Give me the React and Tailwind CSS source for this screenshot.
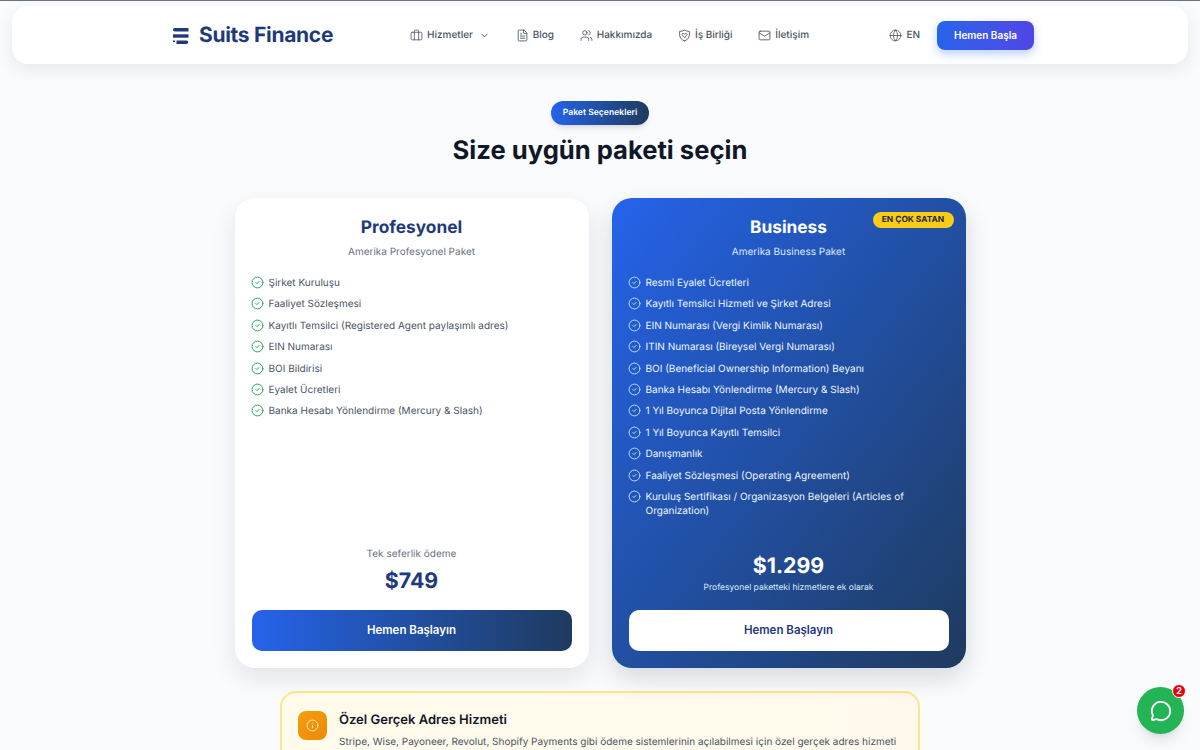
import { Briefcase, ChevronDown, CircleCheck, FileText, Globe, Info, Mail, MessageCircle, Users } from 'lucide-react';

const ShieldHeart = ({ size, strokeWidth }) => (
  <svg width={size} height={size} viewBox="0 0 24 24" fill="none" stroke="currentColor" strokeWidth={strokeWidth} strokeLinecap="round" strokeLinejoin="round">
    <path d="M12 22c-4.500-1.600-9-5.200-9-11V4.500C6 4.500 9 3.500 12 2c3 1.500 6 2.500 9 2.500V11c0 5.800-4.500 9.400-9 11z" />
    <path d="M12 15.500l-3.800-3.600c-1-1-1-2.500 0-3.300 1-.8 2.300-.6 3.100.2l.7.700.7-.7c.8-.8 2.100-1 3.100-.2 1 .8 1 2.300 0 3.300z" />
  </svg>
);

const navLinks = [
  { label: 'Blog', Icon: FileText },
  { label: 'Hakkımızda', Icon: Users },
  { label: 'İş Birliği', Icon: ShieldHeart },
  { label: 'İletişim', Icon: Mail },
];

const proFeatures = [
  'Şirket Kuruluşu',
  'Faaliyet Sözleşmesi',
  'Kayıtlı Temsilci (Registered Agent paylaşımlı adres)',
  'EIN Numarası',
  'BOI Bildirisi',
  'Eyalet Ücretleri',
  'Banka Hesabı Yönlendirme (Mercury & Slash)',
];

const businessFeatures = [
  'Resmi Eyalet Ücretleri',
  'Kayıtlı Temsilci Hizmeti ve Şirket Adresi',
  'EIN Numarası (Vergi Kimlik Numarası)',
  'ITIN Numarası (Bireysel Vergi Numarası)',
  'BOI (Beneficial Ownership Information) Beyanı',
  'Banka Hesabı Yönlendirme (Mercury & Slash)',
  '1 Yıl Boyunca Dijital Posta Yönlendirme',
  '1 Yıl Boyunca Kayıtlı Temsilci',
  'Danışmanlık',
  'Faaliyet Sözleşmesi (Operating Agreement)',
  'Kuruluş Sertifikası / Organizasyon Belgeleri (Articles of Organization)',
];

const Logo = () => (
  <svg width="17" height="18" viewBox="0 0 17 18" fill="#1e3a7b">
    <path d="M3 1h13.500v3.400H3C1.800 4.400 1 3.600 1 2.700S1.800 1 3 1z" />
    <path d="M1 7.300h15.500v3.400H1z" />
    <path d="M4.500 13.600h9.500c1.300 0 2.300.7 2.300 1.700s-1 1.700-2.300 1.700H4.500z" />
    <path d="M1 13.600h2v1.400H1z" />
  </svg>
);

const FeatureList = ({ items, light }) => (
  <ul className="flex flex-col gap-[7px]">
    {items.map((item) => (
      <li key={item} className={`flex items-start gap-[5px] text-[10px] leading-[14.4px] ${light ? 'text-blue-50' : 'text-gray-600'}`}>
        <CircleCheck size={13} strokeWidth={1.8} className={`-ml-[1px] shrink-0 ${light ? 'text-blue-200' : 'text-[#22a35a]'}`} />
        <span>{item}</span>
      </li>
    ))}
  </ul>
);

export default function App() {
  return (
    <div className="relative h-[750px] overflow-hidden border-t border-gray-500 bg-[#f9fbfd] font-['Inter',sans-serif] [text-rendering:geometricPrecision]">
      {/* Navbar */}
      <div className="px-3 pt-[5px]">
        <header className="flex h-[58px] items-center rounded-2xl bg-white pl-[160px] pr-[154px] shadow-[0_6px_18px_rgba(15,23,42,0.08)]">
          <div className="flex w-[238px] items-center gap-[10px] pt-[1px]">
            <Logo />
            <span className="text-[21px] font-bold tracking-[-0.3px] text-[#1e3a7b]">Suits Finance</span>
          </div>
          <nav className="flex items-center gap-[25.7px] text-[10px] font-medium text-gray-600">
            <span className="flex items-center gap-[4px]">
              <Briefcase size={13} strokeWidth={1.5} />
              Hizmetler
              <ChevronDown size={11} className="ml-[2px]" />
            </span>
            {navLinks.map(({ label, Icon }) => (
              <span key={label} className="flex items-center gap-[4px]">
                <Icon size={13} strokeWidth={1.6} />
                {label}
              </span>
            ))}
          </nav>
          <div className="ml-auto flex items-center gap-[4px] text-[10px] font-medium text-gray-600">
            <Globe size={13} strokeWidth={1.5} />
            EN
          </div>
          <button className="ml-[17px] h-[29px] w-[97px] rounded-lg bg-gradient-to-r from-[#2563eb] to-[#4f46e5] text-[10px] font-semibold text-white shadow-[0_4px_10px_rgba(37,99,235,0.3)]">
            Hemen Başla
          </button>
        </header>
      </div>

      {/* Pricing */}
      <main className="flex flex-col items-center pt-[37px]">
        <span className="flex h-[24px] w-[98px] items-center justify-center rounded-full bg-gradient-to-r from-[#2563eb] to-[#1e3a5f] text-[8.6px] font-semibold text-white shadow-md">
          Paket Seçenekleri
        </span>
        <h1 className="mt-[8px] text-[25.6px] font-bold leading-[36px] text-gray-900">Size uygün paketi seçin</h1>

        <div className="mt-[29px] flex gap-[23px]">
          {/* Profesyonel */}
          <section className="flex h-[470px] w-[354px] flex-col rounded-[20px] bg-white px-[17px] pb-[17px] pt-[19px] shadow-[0_10px_25px_rgba(15,23,42,0.1)]">
            <h2 className="text-center text-[17.3px] font-bold leading-[22px] text-[#1e3a7b]">Profesyonel</h2>
            <p className="mt-[6px] mb-[17px] text-center text-[10px] leading-[14px] text-gray-500">Amerika Profesyonel Paket</p>
            <FeatureList items={proFeatures} />
            <div className="mt-auto text-center">
              <p className="text-[10px] leading-[14px] text-gray-500">Tek seferlik ödeme</p>
              <p className="mt-[5px] text-[21.3px] font-bold leading-[30px] text-[#1e3a7b]">$749</p>
            </div>
            <button className="mt-[14px] h-[41px] w-full shrink-0 rounded-[10px] bg-gradient-to-r from-[#2563eb] to-[#1e3a5f] text-[11.5px] font-semibold text-white">
              Hemen Başlayın
            </button>
          </section>

          {/* Business */}
          <section className="relative flex h-[470px] w-[354px] flex-col rounded-[20px] bg-gradient-to-br from-[#2563eb] to-[#1e3a5f] px-[17px] pb-[17px] pt-[19px] text-white shadow-[0_10px_25px_rgba(15,23,42,0.15)]">
            <span className="absolute right-[12px] top-[14px] flex h-[16px] w-[81px] items-center justify-center rounded-full bg-[#facc15] text-[8.4px] font-bold text-gray-800">
              EN ÇOK SATAN
            </span>
            <h2 className="text-center text-[17.3px] font-bold leading-[22px]">Business</h2>
            <p className="mt-[6px] mb-[17px] text-center text-[10px] leading-[14px] text-blue-100">Amerika Business Paket</p>
            <FeatureList items={businessFeatures} light />
            <div className="mt-auto text-center">
              <p className="text-[21.3px] font-bold leading-[30px]">$1.299</p>
              <p className="mt-[1px] text-[8.5px] leading-[12px] text-blue-100">Profesyonel paketteki hizmetlere ek olarak</p>
            </div>
            <button className="mt-[16px] h-[41px] w-full shrink-0 rounded-[10px] bg-white text-[11.5px] font-semibold text-[#1e3a7b]">
              Hemen Başlayın
            </button>
          </section>
        </div>

        {/* Notice */}
        <section className="mt-[23px] flex w-[640px] gap-[12px] rounded-2xl border-2 border-[#fde68a] bg-gradient-to-r from-[#fffbeb] to-[#fef9ec] px-[16px] pb-[17px] pt-[18px]">
          <div className="flex h-[29px] w-[29px] shrink-0 items-center justify-center rounded-lg bg-gradient-to-br from-[#f59e0b] to-[#ea8a0c] text-amber-100">
            <Info size={13} strokeWidth={1.6} />
          </div>
          <div>
            <h3 className="text-[13px] font-semibold leading-[18px] text-gray-900">Özel Gerçek Adres Hizmeti</h3>
            <p className="mt-[5px] text-[10px] leading-[17px] text-gray-600">
              Stripe, Wise, Payoneer, Revolut, Shopify Payments gibi ödeme sistemlerinin açılabilmesi için özel gerçek adres hizmeti
            </p>
          </div>
        </section>
      </main>

      {/* Chat */}
      <button className="absolute right-[16px] top-[686px] flex h-[47px] w-[47px] items-center justify-center rounded-full bg-[#22b455] text-white shadow-lg">
        <MessageCircle size={22} strokeWidth={2} />
        <span className="absolute right-[-2px] top-[-3px] flex h-[14px] w-[14px] items-center justify-center rounded-full border border-white bg-red-600 text-[9px] font-bold">2</span>
      </button>
    </div>
  );
}
